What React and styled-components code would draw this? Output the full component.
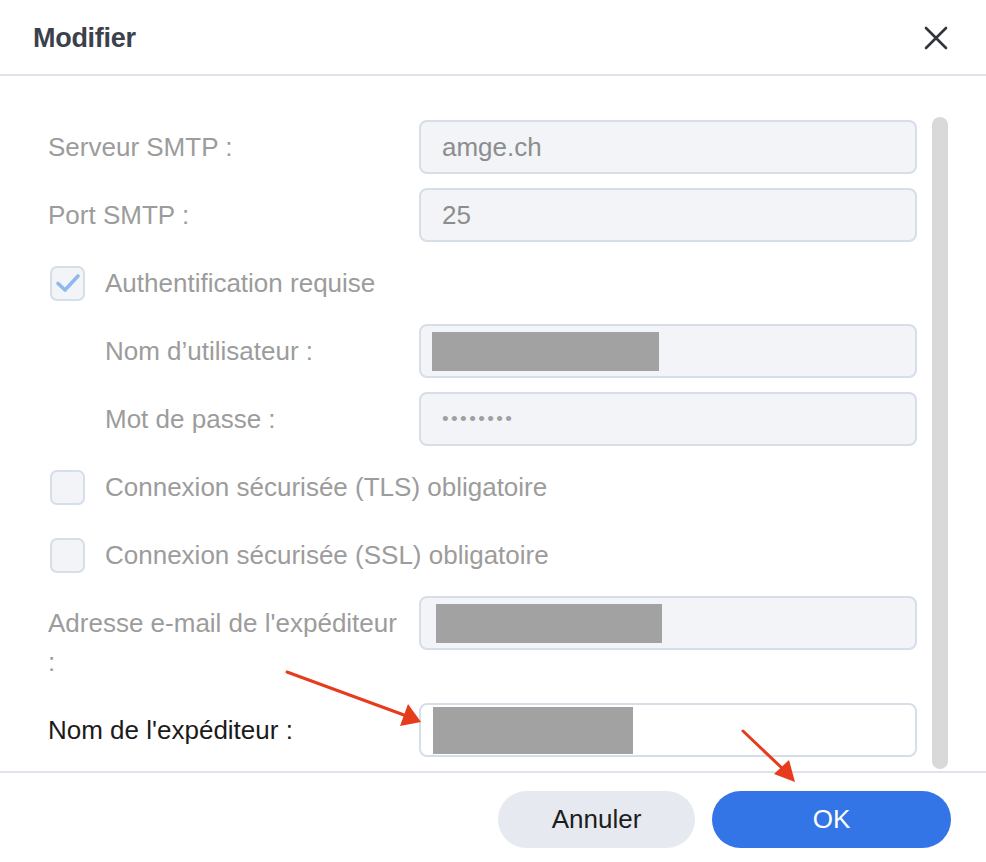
import styled, { createGlobalStyle } from 'styled-components';

const Global = createGlobalStyle`
    html, body {
        margin: 0;
        padding: 0;
        background: #ffffff;
    }
    body {
        font-family: "Liberation Sans", Arial, sans-serif;
    }
`

function Field({ children, white }) {
    return <Input $white={white}>{children}</Input>
}

function App() {

    return (
        <Dialog>
            <Global />
            <Header>
                <Title>Modifier</Title>
                <Close aria-label="Fermer">
                    <svg width="24" height="24" viewBox="0 0 24 24">
                        <path d="M2 2 L22 22 M22 2 L2 22" stroke="#30343b" strokeWidth="2.6" strokeLinecap="round" />
                    </svg>
                </Close>
            </Header>

            <Body>
                <Form>
                    <Row>
                        <Label>Serveur SMTP :</Label>
                        <Field>amge.ch</Field>
                    </Row>
                    <Row>
                        <Label>Port SMTP :</Label>
                        <Field>25</Field>
                    </Row>
                    <CheckRow>
                        <Box>
                            <svg width="26" height="22" viewBox="0 0 26 22">
                                <path d="M3 11.5 L10 18 L23 4" fill="none" stroke="#90b8ee" strokeWidth="3.6" strokeLinecap="round" strokeLinejoin="round" />
                            </svg>
                        </Box>
                        <CheckLabel>Authentification requise</CheckLabel>
                    </CheckRow>
                    <Row>
                        <Label $indent>Nom d’utilisateur :</Label>
                        <Field>
                            <Redacted $left={13} $w={227} $h={39} />
                        </Field>
                    </Row>
                    <Row>
                        <Label $indent>Mot de passe :</Label>
                        <Field><Dots>••••••••</Dots></Field>
                    </Row>
                    <CheckRow>
                        <Box />
                        <CheckLabel>Connexion sécurisée (TLS) obligatoire</CheckLabel>
                    </CheckRow>
                    <CheckRow>
                        <Box />
                        <CheckLabel>Connexion sécurisée (SSL) obligatoire</CheckLabel>
                    </CheckRow>
                    <Row>
                        <Label>Adresse e-mail de l'expéditeur :</Label>
                        <Field>
                            <Redacted $left={17} $w={226} $h={39} />
                        </Field>
                    </Row>
                    <Row>
                        <Label $dark>Nom de l'expéditeur :</Label>
                        <Field white>
                            <Redacted $left={14} $w={200} $h={47} />
                        </Field>
                    </Row>
                </Form>
                <Scrollbar />
            </Body>

            <Footer>
                <Button>Annuler</Button>
                <Button $primary>OK</Button>
            </Footer>

            {/* flèches d'annotation posées sur la capture */}
            <Arrows width="986" height="862" viewBox="0 0 986 862">
                <line x1="287" y1="672" x2="404" y2="715" stroke="#e63b1c" strokeWidth="3" strokeLinecap="round" />
                <polygon points="421,722 400,726 408,704" fill="#e63b1c" />
                <line x1="743" y1="731" x2="784" y2="770" stroke="#e63b1c" strokeWidth="3" strokeLinecap="round" />
                <polygon points="795,782 774,774 789,760" fill="#e63b1c" />
            </Arrows>
        </Dialog>
    );
}

const Dialog = styled.div`
    position: relative;
    width: 986px;
    height: 862px;
    display: flex;
    flex-direction: column;
    overflow: hidden;
    background: #ffffff;
`

const Header = styled.header`
    flex: 0 0 76px;
    box-sizing: border-box;
    display: flex;
    align-items: center;
    justify-content: space-between;
    padding: 2px 38px 0 33px;
    border-bottom: 2px solid #dfe4ec;
`

const Title = styled.h1`
    margin: 0;
    font-size: 27px;
    font-weight: 700;
    color: #3b414b;
    letter-spacing: -0.3px;
`

const Close = styled.button`
    border: 0;
    background: none;
    padding: 0;
    display: flex;
    cursor: pointer;
`

const Body = styled.div`
    flex: 1;
    min-height: 0;
    display: flex;
    overflow: hidden;
    padding-left: 48px;
`

const Form = styled.div`
    width: 869px;
    padding-top: 44px;
    display: flex;
    flex-direction: column;
    gap: 14px;
`

const Row = styled.div`
    display: flex;
    align-items: flex-start;
`

const Label = styled.div`
    flex: 0 0 371px;
    box-sizing: border-box;
    padding: 7.5px 16px 7.5px ${p => (p.$indent ? '57px' : '0')};
    font-size: 26px;
    line-height: 39px;
    color: ${p => (p.$dark ? '#1b1b1b' : '#9c9c9c')};
`

const Input = styled.div`
    flex: 0 0 498px;
    box-sizing: border-box;
    height: 54px;
    display: flex;
    align-items: center;
    padding-left: 21px;
    border: 2px solid #d6dee9;
    border-radius: 8px;
    background: ${p => (p.$white ? '#ffffff' : '#f2f4f8')};
    font-size: 26px;
    color: #8d8d8d;
`

const Redacted = styled.span`
    display: block;
    margin-left: ${p => p.$left - 23}px;
    width: ${p => p.$w}px;
    height: ${p => p.$h}px;
    background: #a2a2a2;
`

const Dots = styled.span`
    font-size: 19px;
    letter-spacing: 2.4px;
    color: #a0a0a0;
`

const CheckRow = styled.div`
    height: 54px;
    display: flex;
    align-items: center;
    padding-left: 2px;
`

const Box = styled.span`
    width: 35px;
    height: 35px;
    box-sizing: border-box;
    border: 2px solid #d6dee9;
    border-radius: 7px;
    background: #f2f4f8;
    display: flex;
    align-items: center;
    justify-content: center;
    margin-right: 20px;
`

const CheckLabel = styled.span`
    font-size: 26px;
    color: #9c9c9c;
`

const Scrollbar = styled.div`
    width: 16px;
    margin: 41px 0 2px 15px;
    border-radius: 8px;
    background: #d9d9d9;
`

const Footer = styled.footer`
    flex: 0 0 91px;
    box-sizing: border-box;
    border-top: 2px solid #dfe4ec;
    display: flex;
    justify-content: flex-end;
    align-items: flex-start;
    padding: 18px 35px 0 0;
    gap: 17px;
`

const Button = styled.button`
    height: 57px;
    width: ${p => (p.$primary ? '239px' : '197px')};
    border: 0;
    border-radius: 29px;
    background: ${p => (p.$primary ? '#3375e6' : '#e6eaf0')};
    color: ${p => (p.$primary ? '#ffffff' : '#1d1d1d')};
    font-family: "Liberation Sans", Arial, sans-serif;
    font-size: 26px;
`

const Arrows = styled.svg`
    position: absolute;
    left: 0;
    top: 0;
    pointer-events: none;
`

export default App
